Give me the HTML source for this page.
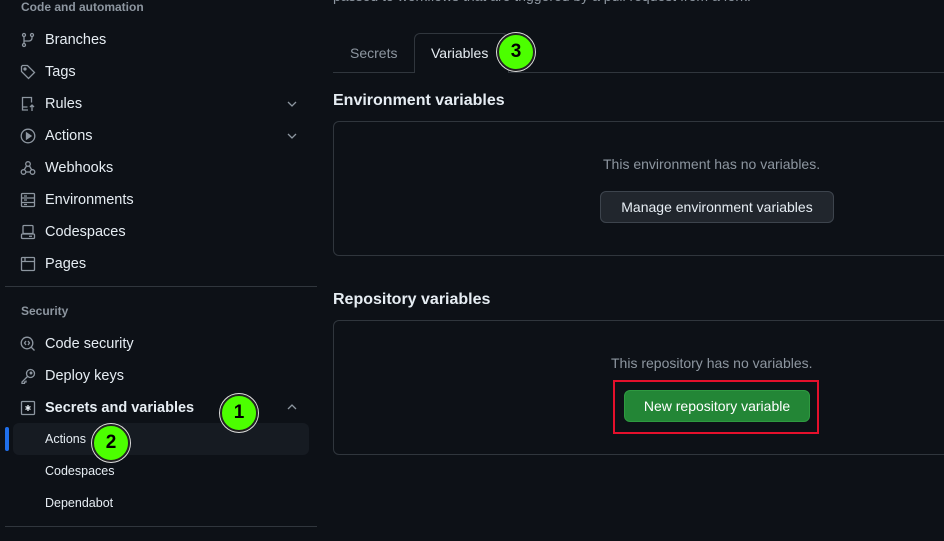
<!DOCTYPE html>
<html><head><style>
*{margin:0;padding:0;box-sizing:border-box}
body{width:944px;height:541px;background:#0d1117;font-family:"Liberation Sans",sans-serif;color:#e6edf3;position:relative;overflow:hidden;font-size:14px}
.a{position:absolute;white-space:nowrap}
.h{font-size:12px;font-weight:bold;color:#8d96a0}
.it{font-size:14.5px;line-height:20px}
.ic{position:absolute;left:20px;width:16px;height:16px}
.sub{font-size:12.5px;line-height:18px}
.badge{position:absolute;width:38px;height:38px;border-radius:50%;background:#4cff00;border:2px solid #222;box-shadow:0 0 0 1px #ddd;color:#000;font-weight:bold;font-size:19px;text-align:center;line-height:34px}
.btn{position:absolute;border-radius:6px;font-size:14px;text-align:center}
.box{position:absolute;left:333px;width:640px;border:1px solid #30363d;border-radius:6px}
.mut{color:#8d96a0;font-size:14px}
</style></head><body>
<div class="a h" style="left:21px;top:0px">Code and automation</div>
<svg class="ic" style="top:32px" viewBox="0 0 16 16" fill="none" stroke="#8d96a0" stroke-width="1.3"><circle cx="4" cy="3" r="1.5"/><circle cx="12" cy="3" r="1.5"/><circle cx="4" cy="13" r="1.5"/><path d="M4 4.5v7M12 4.5v1.5a3 3 0 0 1-3 3H4"/></svg>
<div class="a it" style="left:45px;top:30px">Branches</div>
<svg class="ic" style="top:64px" viewBox="0 0 16 16" fill="none" stroke="#8d96a0" stroke-width="1.3"><path d="M1.5 2.5v5l7 7 6-6-7-7h-5z"/><circle cx="5" cy="5" r="1" fill="#8d96a0"/></svg>
<div class="a it" style="left:45px;top:62px">Tags</div>
<svg class="ic" style="top:96px" viewBox="0 0 16 16" fill="none" stroke="#8d96a0" stroke-width="1.3"><path d="M8 14H2.5V1.5h9v5M2.5 11h5M12 15V9M10 11l2-2 2 2"/></svg>
<div class="a it" style="left:45px;top:94px">Rules</div>
<svg class="a" style="left:286px;top:98px" width="12" height="12" viewBox="0 0 12 12" fill="none" stroke="#8d96a0" stroke-width="1.3"><path d="M2 4l4 4 4-4"/></svg>
<svg class="ic" style="top:128px" viewBox="0 0 16 16" fill="none" stroke="#8d96a0" stroke-width="1.3"><circle cx="8" cy="8" r="6.8"/><path d="M6.5 5v6l4.5-3z" fill="#8d96a0"/></svg>
<div class="a it" style="left:45px;top:126px">Actions</div>
<svg class="a" style="left:286px;top:130px" width="12" height="12" viewBox="0 0 12 12" fill="none" stroke="#8d96a0" stroke-width="1.3"><path d="M2 4l4 4 4-4"/></svg>
<svg class="ic" style="top:160px" viewBox="0 0 16 16" fill="none" stroke="#8d96a0" stroke-width="1.3"><circle cx="8" cy="4" r="2.3"/><circle cx="3.5" cy="12" r="2.3"/><circle cx="12.5" cy="12" r="2.3"/><path d="M6.5 6L4 10M9.5 6l2.3 4M6 12h4"/></svg>
<div class="a it" style="left:45px;top:158px">Webhooks</div>
<svg class="ic" style="top:192px" viewBox="0 0 16 16" fill="none" stroke="#8d96a0" stroke-width="1.3"><rect x="1.5" y="1.5" width="13" height="13" rx="1"/><path d="M1.5 6h13M1.5 10.5h13M4 4h3M4 8h3M4 12.5h3"/></svg>
<div class="a it" style="left:45px;top:190px">Environments</div>
<svg class="ic" style="top:224px" viewBox="0 0 16 16" fill="none" stroke="#8d96a0" stroke-width="1.3"><rect x="3" y="1.5" width="10" height="8" rx="1"/><rect x="1.5" y="10" width="13" height="4.5" rx="1"/><path d="M9 12.3h3"/></svg>
<div class="a it" style="left:45px;top:222px">Codespaces</div>
<svg class="ic" style="top:256px" viewBox="0 0 16 16" fill="none" stroke="#8d96a0" stroke-width="1.3"><rect x="1.5" y="1.5" width="13" height="13" rx="1"/><path d="M1.5 5.5h13M5 1.5v4"/></svg>
<div class="a it" style="left:45px;top:254px">Pages</div>
<div class="a" style="left:5px;top:286px;width:312px;height:1px;background:#30363d"></div>
<div class="a h" style="left:21px;top:304px">Security</div>
<svg class="ic" style="top:336px" viewBox="0 0 16 16" fill="none" stroke="#8d96a0" stroke-width="1.3"><circle cx="7" cy="7" r="5.8"/><path d="M11 11l3.5 3.5M6 5L4.5 7 6 9M8 5l1.5 2L8 9"/></svg>
<div class="a it" style="left:45px;top:334px">Code security</div>
<svg class="ic" style="top:368px" viewBox="0 0 16 16" fill="none" stroke="#8d96a0" stroke-width="1.3"><circle cx="10.5" cy="5.5" r="4"/><path d="M7.5 8.5L2 14v1.5h2.5V14H6v-1.5"/><circle cx="11" cy="5" r=".8" fill="#8d96a0"/></svg>
<div class="a it" style="left:45px;top:366px">Deploy keys</div>
<svg class="ic" style="top:400px" viewBox="0 0 16 16" fill="none" stroke="#8d96a0" stroke-width="1.3"><rect x="1.5" y="1.5" width="13" height="13" rx="1"/><path d="M8 5v6M5.5 6.5l5 3M10.5 6.5l-5 3" stroke="#e6edf3"/></svg>
<div class="a it" style="left:45px;top:398px;font-weight:bold">Secrets and variables</div>
<svg class="a" style="left:286px;top:401px" width="12" height="12" viewBox="0 0 12 12" fill="none" stroke="#8d96a0" stroke-width="1.3"><path d="M2 8l4-4 4 4"/></svg>
<div class="a" style="left:13px;top:423px;width:296px;height:32px;background:#161b22;border-radius:6px"></div>
<div class="a" style="left:5px;top:427px;width:4px;height:24px;background:#1f6feb;border-radius:2px"></div>
<div class="a sub" style="left:45px;top:430px">Actions</div>
<div class="a sub" style="left:45px;top:462px">Codespaces</div>
<div class="a sub" style="left:45px;top:494px">Dependabot</div>
<div class="a" style="left:5px;top:526px;width:312px;height:1px;background:#30363d"></div>
<div class="badge" style="left:220px;top:394px">1</div>
<div class="badge" style="left:92px;top:424px">2</div>

<div class="a" style="left:333px;top:-12px;font-size:14px;color:#8d96a0">passed to workflows that are triggered by a pull request from a fork.</div>
<div class="a" style="left:333px;top:72px;width:611px;height:1px;background:#30363d"></div>
<div class="a" style="left:414px;top:33px;width:95px;height:40px;border:1px solid #30363d;border-bottom:none;border-radius:6px 6px 0 0;background:#0d1117"></div>
<div class="a" style="left:350px;top:45px;color:#8d96a0">Secrets</div>
<div class="a" style="left:431px;top:45px">Variables</div>
<div class="badge" style="left:497px;top:33px">3</div>
<div class="a" style="left:333px;top:92px;font-size:16px;font-weight:bold">Environment variables</div>
<div class="box" style="top:121px;height:135px"></div>
<div class="a mut" style="left:603px;top:156px">This environment has no variables.</div>
<div class="btn" style="left:600px;top:191px;width:234px;height:32px;background:#21262d;border:1px solid #3d444d;line-height:30px">Manage environment variables</div>
<div class="a" style="left:333px;top:291px;font-size:16px;font-weight:bold">Repository variables</div>
<div class="box" style="top:320px;height:135px"></div>
<div class="a mut" style="left:611px;top:355px">This repository has no variables.</div>
<div class="a" style="left:613px;top:380px;width:206px;height:54px;border:2px solid #e5102c"></div>
<div class="btn" style="left:624px;top:390px;width:186px;height:32px;background:#238636;border:1px solid #2e9a40;line-height:30px;color:#fff">New repository variable</div>
</body></html>
